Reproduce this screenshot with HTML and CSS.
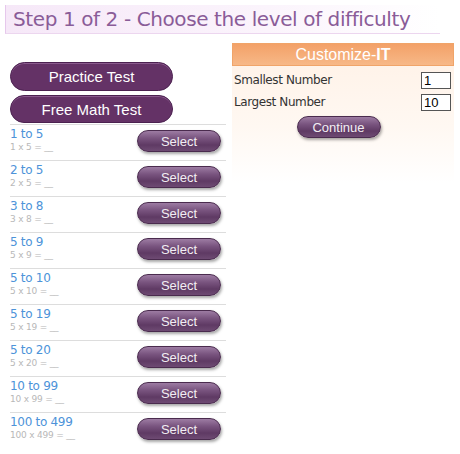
FILE: index.html
```html
<!DOCTYPE html>
<html lang="en">
<head>
  <meta charset="UTF-8" />
  <title>Choose the level of difficulty</title>
  <link rel="stylesheet" href="styles.css">
</head>
<body>
  <div class="title">Step 1 of 2 - Choose the level of difficulty</div>

  <div class="page">
    <div class="left">
      <button class="big-btn">Practice Test</button>
      <button class="big-btn">Free Math Test</button>

      <div class="levels">
        <div class="level">
          <div><div class="range">1 to 5</div><div class="sample">1 x 5 = __</div></div>
          <button class="pill">Select</button>
        </div>
        <div class="level">
          <div><div class="range">2 to 5</div><div class="sample">2 x 5 = __</div></div>
          <button class="pill">Select</button>
        </div>
        <div class="level">
          <div><div class="range">3 to 8</div><div class="sample">3 x 8 = __</div></div>
          <button class="pill">Select</button>
        </div>
        <div class="level">
          <div><div class="range">5 to 9</div><div class="sample">5 x 9 = __</div></div>
          <button class="pill">Select</button>
        </div>
        <div class="level">
          <div><div class="range">5 to 10</div><div class="sample">5 x 10 = __</div></div>
          <button class="pill">Select</button>
        </div>
        <div class="level">
          <div><div class="range">5 to 19</div><div class="sample">5 x 19 = __</div></div>
          <button class="pill">Select</button>
        </div>
        <div class="level">
          <div><div class="range">5 to 20</div><div class="sample">5 x 20 = __</div></div>
          <button class="pill">Select</button>
        </div>
        <div class="level">
          <div><div class="range">10 to 99</div><div class="sample">10 x 99 = __</div></div>
          <button class="pill">Select</button>
        </div>
        <div class="level">
          <div><div class="range">100 to 499</div><div class="sample">100 x 499 = __</div></div>
          <button class="pill">Select</button>
        </div>
      </div>
    </div>

    <div class="custom">
      <div class="custom-head">Customize-<b>IT</b></div>
      <div class="custom-body">
        <div class="field">
          <label>Smallest Number</label>
          <input type="text" value="1" />
        </div>
        <div class="field">
          <label>Largest Number</label>
          <input type="text" value="10" />
        </div>
        <div class="center">
          <button class="pill wide">Continue</button>
        </div>
      </div>
    </div>
  </div>
</body>
</html>
```

FILE: styles.css
```css
html {
  overflow: hidden;
}
body {
  margin: 0;
  width: 460px;
  font-family: "DejaVu Sans", Verdana, sans-serif;
  background: white;
}
.title {
  width: 427px;
  margin: 5px 0 0 5px;
  height: 28px;
  padding-left: 7px;
  border-left: 1px solid #e6c8ec;
  border-bottom: 1px solid #ecd6ef;
  background: linear-gradient(to right, #f6e8f8, #fbf4fc 60%, #fff);
  color: #8a5c98;
  font-size: 20px;
  line-height: 28px;
  letter-spacing: -0.4px;
}
.page {
  display: flex;
  gap: 6px;
  width: 444px;
  padding: 0 6px 0 10px;
}
.left {
  flex: none;
  width: 216px;
  padding-top: 28px;
}
.big-btn {
  display: block;
  width: 163px;
  height: 29px;
  margin-bottom: 4px;
  border: 1px solid #4b2150;
  border-radius: 15px;
  background: #643266;
  box-shadow: inset 0 1px 0 #8a5a8d;
  color: white;
  font-family: "Liberation Sans", Arial, sans-serif;
  font-size: 15px;
  cursor: pointer;
}
.big-btn + .big-btn {
  height: 28px;
  margin-bottom: 1px;
}
.levels {
  border-top: 1px solid #ddd;
}
.level {
  display: flex;
  justify-content: space-between;
  align-items: flex-start;
  height: 35px;
  border-bottom: 1px solid #ddd;
}
.level:last-child {
  border-bottom: none;
}
.range {
  margin-top: 2px;
  color: #4d93d9;
  font-size: 12px;
  line-height: 14px;
  letter-spacing: -0.3px;
}
.sample {
  color: #b8b8b8;
  font-size: 9px;
  line-height: 12px;
  letter-spacing: -0.2px;
}
.pill {
  width: 84px;
  height: 22px;
  margin: 5px 5px 0 0;
  border: 1px solid #4a2b4e;
  border-radius: 11px;
  background: linear-gradient(#9d7ca3, #7a5580 35%, #5f3a64 70%, #6e4a73);
  box-shadow: 1px 2px 3px rgba(0, 0, 0, 0.35);
  color: #f2eef3;
  font-family: "Liberation Sans", Arial, sans-serif;
  font-size: 13px;
  padding: 0;
  cursor: pointer;
}
.custom {
  flex: none;
  width: 222px;
  margin-top: 9px;
  height: 140px;
  background: linear-gradient(#fff1e6, #fff8f2 60%, #fff);
}
.custom-head {
  height: 21px;
  border: 1px solid #f0a469;
  background: linear-gradient(#f3a168, #f7b887);
  color: white;
  font-family: "Liberation Sans", Arial, sans-serif;
  font-size: 16px;
  line-height: 21px;
  text-align: center;
}
.custom-body {
  padding: 3px 3px 0 2px;
}
.field {
  display: flex;
  justify-content: space-between;
  align-items: center;
  height: 22px;
}
.field label {
  color: #333;
  font-size: 12px;
  letter-spacing: -0.4px;
}
.field input {
  flex: none;
  width: 24px;
  height: 15px;
  padding: 0 2px;
  border: 1px solid #555;
  font-family: "Liberation Sans", Arial, sans-serif;
  font-size: 13px;
}
.center {
  display: flex;
  justify-content: center;
  padding-right: 8px;
}
.wide {
  margin: 3px 0 0 0;
  width: 84px;
}
```
